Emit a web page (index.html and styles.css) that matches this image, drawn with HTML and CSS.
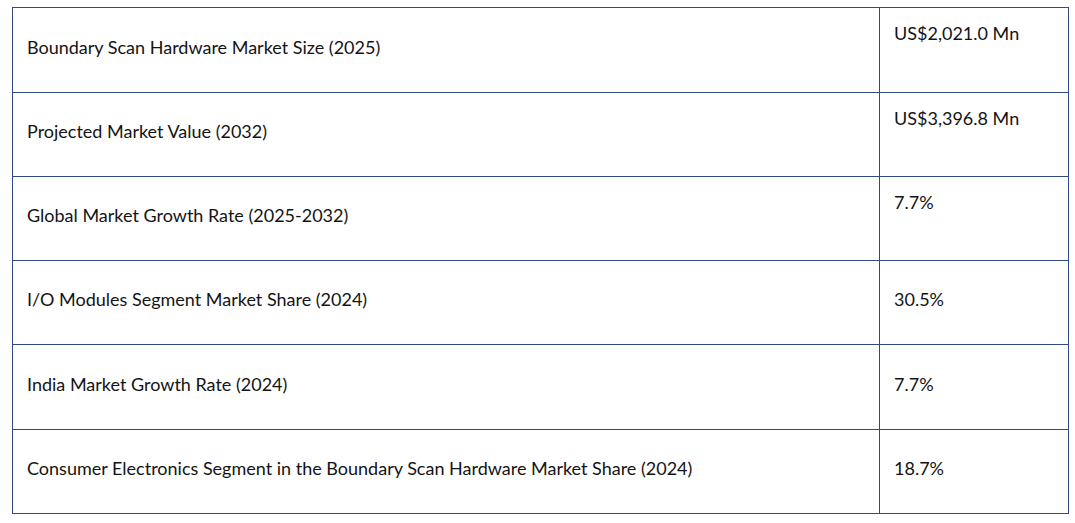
FILE: index.html
```html
<!DOCTYPE html>
<html>
<head>
<meta charset="utf-8">
<link rel="stylesheet" href="styles.css">
</head>
<body>
<table class="stats">
  <tr class="tall"><td class="label">Boundary Scan Hardware Market Size (2025)</td><td class="value top">US$2,021.0 Mn</td></tr>
  <tr><td class="label">Projected Market Value (2032)</td><td class="value top">US$3,396.8 Mn</td></tr>
  <tr><td class="label">Global Market Growth Rate (2025-2032)</td><td class="value top">7.7%</td></tr>
  <tr><td class="label">I/O Modules Segment Market Share (2024)</td><td class="value">30.5%</td></tr>
  <tr class="tall"><td class="label">India Market Growth Rate (2024)</td><td class="value">7.7%</td></tr>
  <tr><td class="label">Consumer Electronics Segment in the Boundary Scan Hardware Market Share (2024)</td><td class="value">18.7%</td></tr>
</table>
</body>
</html>
```
FILE: styles.css
```css
body {
  margin: 7px 6px 0 12px;
  font-family: Lato, "Open Sans", sans-serif;
  font-size: 18px;
  color: #141414;
  background: #fff;
}
.stats {
  border-collapse: collapse;
  width: 1057px;
}
.stats tr {
  height: 84px;
}
.stats tr.tall {
  height: 85px;
}
.stats td {
  border: 1px solid #2f4a85;
  padding: 0 14px 6px;
  line-height: 27px;
  vertical-align: middle;
}
.stats td.value {
  width: 160px;
}
.stats td.top {
  vertical-align: top;
  padding-top: 12px;
  padding-bottom: 0;
}
```
